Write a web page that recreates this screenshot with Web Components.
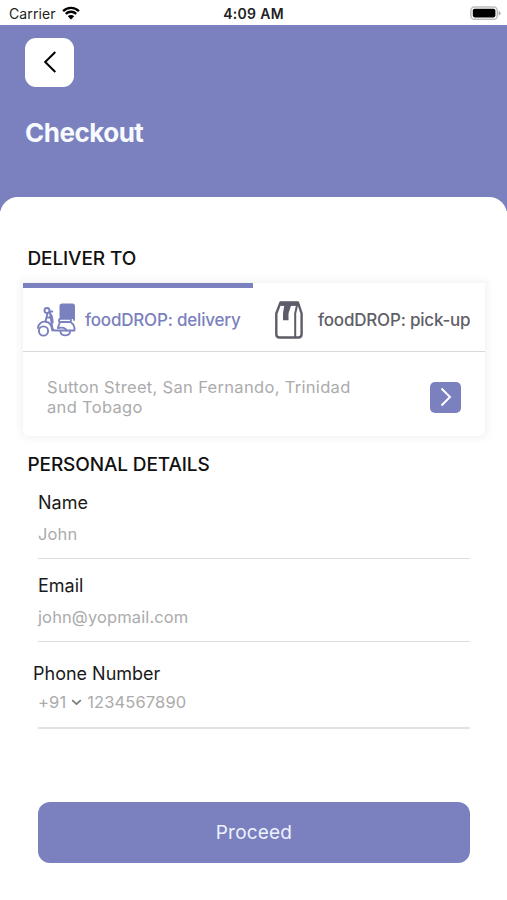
<!DOCTYPE html>
<html lang="en">
<head>
<meta charset="utf-8">
<title>Checkout</title>
<style>
    body {
        margin: 0;
        background: #fff;
        font-family: Inter, "Liberation Sans", sans-serif;
        --brand: #7a81be;
        --muted: #ababab;
    }
</style>
</head>
<body>
<checkout-page></checkout-page>

<script>
class StatusBar extends HTMLElement {
    constructor() {
        super();
        this.attachShadow({ mode: 'open' });
        this.shadowRoot.innerHTML = `
        <style>
            :host {
                display: grid;
                grid-template-columns: 1fr auto 1fr;
                align-items: center;
                box-sizing: border-box;
                height: 25px;
                padding: 2px 6px 0 9px;
                font-size: 14px;
                line-height: 20px;
                color: #222;
            }
            .carrier {
                display: flex;
                align-items: center;
                gap: 6px;
                letter-spacing: 0.1px;
            }
            .time {
                margin-right: 3px;
                font-weight: 600;
                letter-spacing: 0.3px;
            }
            .battery {
                justify-self: end;
            }
            svg {
                display: block;
                margin-top: -1px;
            }
        </style>
        <div class="carrier">
            <span>Carrier</span>
            <svg width="18" height="14" viewBox="0 0 18 14">
                <path d="M1.1 5.1a11.2 11.2 0 0 1 15.8 0M3.8 7.9a7.4 7.4 0 0 1 10.4 0" fill="none" stroke="#000" stroke-width="2.3"/>
                <path d="M9 13.6 5.8 10.3a4.6 4.6 0 0 1 6.4 0z"/>
            </svg>
        </div>
        <div class="time">4:09 AM</div>
        <svg class="battery" width="31" height="15" viewBox="0 0 31 15">
            <rect x=".9" y=".9" width="26.4" height="12.4" rx="3.6" fill="#fff" stroke="#bdbdbd" stroke-width="1.5"/>
            <rect x="2.8" y="2.8" width="22.6" height="8.6" rx="1.8"/>
            <path d="M28.6 5v4.400q2-.6 2-2.200t-2-2.200z" fill="#aaa"/>
        </svg>
        `;
    }
}

class PageHeader extends HTMLElement {
    constructor() {
        super();
        this.attachShadow({ mode: 'open' });
        this.shadowRoot.innerHTML = `
        <style>
            :host {
                display: block;
                box-sizing: border-box;
                height: 186px;
                padding: 12.5px 25px 0;
                background: var(--brand);
            }
            button {
                display: flex;
                align-items: center;
                justify-content: center;
                width: 49px;
                height: 49px;
                padding: 0;
                border: none;
                border-radius: 11px;
                background: #fff;
            }
            h1 {
                margin: 29.5px 0 0;
                font-size: 26px;
                line-height: 34px;
                font-weight: 700;
                letter-spacing: -0.5px;
                color: #f7faff;
            }
        </style>
        <button aria-label="Back">
            <svg width="14" height="24" viewBox="0 0 14 24">
                <path d="M12.300 2 2.200 12l10.100 10" fill="none" stroke="#000" stroke-width="2"/>
            </svg>
        </button>
        <h1><slot></slot></h1>
        `;
    }
}

class SectionTitle extends HTMLElement {
    constructor() {
        super();
        this.attachShadow({ mode: 'open' });
        this.shadowRoot.innerHTML = `
        <style>
            :host {
                display: block;
            }
            h2 {
                margin: 0;
                font-size: 19px;
                line-height: 24px;
                font-weight: 500;
                letter-spacing: -0.12px;
                color: #111;
            }
        </style>
        <h2><slot></slot></h2>
        `;
    }
}

class DeliveryTab extends HTMLElement {
    constructor() {
        super();
        this.attachShadow({ mode: 'open' });
        this.shadowRoot.innerHTML = `
        <style>
            :host {
                display: flex;
                align-items: center;
                box-sizing: border-box;
                border-top: 5px solid transparent;
                padding-top: 2px;
                color: #5f5f68;
                font-size: 17px;
                line-height: 22px;
                font-weight: 500;
                letter-spacing: -0.2px;
                white-space: nowrap;
            }
            :host([active]) {
                border-top-color: var(--brand);
                color: var(--brand);
            }
            ::slotted(svg) {
                flex: none;
            }
        </style>
        <slot name="icon"></slot>
        <slot></slot>
        `;
    }
}

class AddressCard extends HTMLElement {
    constructor() {
        super();
        this.attachShadow({ mode: 'open' });
        this.shadowRoot.innerHTML = `
        <style>
            :host {
                display: flex;
                align-items: center;
                justify-content: space-between;
                box-sizing: border-box;
                height: 84px;
                padding: 6px 24px 0;
                border-radius: 6px;
                background: #fff;
            }
            p {
                width: 325px;
                margin: 0;
                font-size: 16.5px;
                line-height: 20.5px;
                letter-spacing: 0.32px;
                color: var(--muted);
            }
            button {
                display: flex;
                align-items: center;
                justify-content: center;
                width: 31px;
                height: 31px;
                padding: 0;
                border: none;
                border-radius: 5px;
                background: var(--brand);
            }
        </style>
        <p><slot></slot></p>
        <button aria-label="Change address">
            <svg width="12" height="20" viewBox="0 0 12 20">
                <path d="m1.500 1.500 8.500 8.500-8.500 8.500" fill="none" stroke="#fff" stroke-width="2"/>
            </svg>
        </button>
        `;
    }
}

class FormField extends HTMLElement {
    constructor() {
        super();
        this.attachShadow({ mode: 'open' });
        this.shadowRoot.innerHTML = `
        <style>
            :host {
                display: block;
                box-sizing: border-box;
                height: 83px;
                border-bottom: 1px solid #dedede;
            }
            .label {
                padding-top: 15px;
                font-size: 18px;
                line-height: 24px;
                color: #1a1a1a;
            }
            .value {
                display: flex;
                align-items: center;
                margin-top: 8px;
                font-size: 16.5px;
                line-height: 22px;
                letter-spacing: 0.12px;
                color: var(--muted);
            }
            :host([phone]) {
                height: 87px;
                border-bottom-width: 2px;
                border-bottom-color: #e2e2e2;
            }
            :host([phone]) .label {
                margin-left: -5px;
                padding-top: 20px;
            }
            :host([phone]) .value {
                margin-top: 5px;
            }
        </style>
        <div class="label">${this.getAttribute('label')}</div>
        <div class="value"><slot></slot></div>
        `;
    }
}

class PrimaryButton extends HTMLElement {
    constructor() {
        super();
        this.attachShadow({ mode: 'open' });
        this.shadowRoot.innerHTML = `
        <style>
            :host {
                display: block;
            }
            button {
                display: block;
                width: 100%;
                height: 61px;
                padding: 1px 0 0;
                border: none;
                border-radius: 12px;
                background: var(--brand);
                color: #eef2ff;
                font: 400 19px/60px Inter, sans-serif;
                letter-spacing: 0.2px;
            }
        </style>
        <button><slot></slot></button>
        `;
    }
}

class CheckoutPage extends HTMLElement {
    constructor() {
        super();
        this.attachShadow({ mode: 'open' });
        this.shadowRoot.innerHTML = `
        <style>
            :host {
                display: block;
                height: 900px;
                overflow: hidden;
            }
            main {
                box-sizing: border-box;
                margin-top: -14.5px;
                padding: 50.5px 22px 0 23px;
                border-radius: 18px 18px 0 0;
                background: #fff;
            }
            section-title {
                padding-left: 4.5px;
            }
            .deliver {
                margin-top: 11.5px;
                border-radius: 0 0 6px 6px;
                box-shadow: 0 0 8px 2px rgba(0, 0, 0, 0.06);
                background: #fff;
            }
            .tabs {
                display: grid;
                grid-template-columns: 230px 1fr;
                height: 68.5px;
                border-bottom: 1px solid #d9d9d9;
            }
            .scooter {
                margin: 0 9px 0 14px;
            }
            .bag {
                margin: 0 15px 0 22px;
            }
            .personal {
                margin-top: 16.5px;
            }
            form {
                margin: -0.5px 15px 0;
            }
            .chevron {
                margin: 0 5px;
            }
            primary-button {
                margin-top: 73px;
            }
        </style>
        <status-bar></status-bar>
        <page-header>Checkout</page-header>
        <main>
            <section-title>DELIVER TO</section-title>
            <div class="deliver">
                <div class="tabs">
                    <delivery-tab active>
                        <svg slot="icon" class="scooter" width="39" height="34" viewBox="0 0 39 34" fill="none" stroke="#7a81be" stroke-width="1.9" stroke-linejoin="round" stroke-linecap="round">
                            <rect x="22.500" y=".500" width="15.500" height="15.500" rx="2.500" fill="#7a81be" stroke="none"/>
                            <path d="M37 14v3"/>
                            <rect x="22" y="15.800" width="12" height="3.200" rx="1.500"/>
                            <path d="M22.500 19.500c.3 2-1.500 3-1.500 5.500M34 19.500c2.500 1.500 3.800 4.500 3.500 8H18c-1.500 0-2.500-1-2.700-2.500L13 9.500"/>
                            <circle cx="10" cy="7.500" r="2.500"/>
                            <path d="M10.500 10.200 8.500 18.500M12.500 8.500h2.800M9.500 14.500h4M13.500 11.500c2.500 1.500 1.500 5 2.300 8"/>
                            <path d="M1 25c.3-4.500 4-7 8-6.200 4 .7 6 4 6.300 8.700"/>
                            <circle cx="6.500" cy="28" r="4.600"/>
                            <path d="M21 25c4-1 8 0 8.500 2.500M23.500 28.500c0 5.200 9.500 5.200 9.500 0"/>
                        </svg>
                        <span>foodDROP: delivery</span>
                    </delivery-tab>
                    <delivery-tab>
                        <svg slot="icon" class="bag" width="28" height="38" viewBox="0 0 28 38" fill="none" stroke="#5d5c68" stroke-width="2.400" stroke-linejoin="round">
                            <path d="M5.500 1.500h17.500l3.600 11v20.800q0 3.200-3.200 3.200H4.500q-3.200 0-3.200-3.200V12.500z"/>
                            <path d="M5.500 2.900h17.500" stroke-width="4"/>
                            <path d="M22.300 3 20.200 12.500V36" stroke-width="2"/>
                            <path d="M9.500 3h7l-3 9.500v6.800H8v-7z" fill="#5d5c68" stroke="none"/>
                        </svg>
                        <span>foodDROP: pick-up</span>
                    </delivery-tab>
                </div>
                <address-card>Sutton Street, San Fernando, Trinidad<br>and Tobago</address-card>
            </div>
            <section-title class="personal">PERSONAL DETAILS</section-title>
            <form>
                <form-field label="Name">John</form-field>
                <form-field label="Email">john@yopmail.com</form-field>
                <form-field label="Phone Number" phone>
                    <span>+91</span>
                    <svg class="chevron" width="11" height="7" viewBox="0 0 11 7">
                        <path d="m1.200 1.200 4.300 4 4.300-4" fill="none" stroke="#777" stroke-width="1.600"/>
                    </svg>
                    <span>1234567890</span>
                </form-field>
                <primary-button>Proceed</primary-button>
            </form>
        </main>
        `;
    }
}

customElements.define('status-bar', StatusBar);
customElements.define('page-header', PageHeader);
customElements.define('section-title', SectionTitle);
customElements.define('delivery-tab', DeliveryTab);
customElements.define('address-card', AddressCard);
customElements.define('form-field', FormField);
customElements.define('primary-button', PrimaryButton);
customElements.define('checkout-page', CheckoutPage);
</script>
</body>
</html>
